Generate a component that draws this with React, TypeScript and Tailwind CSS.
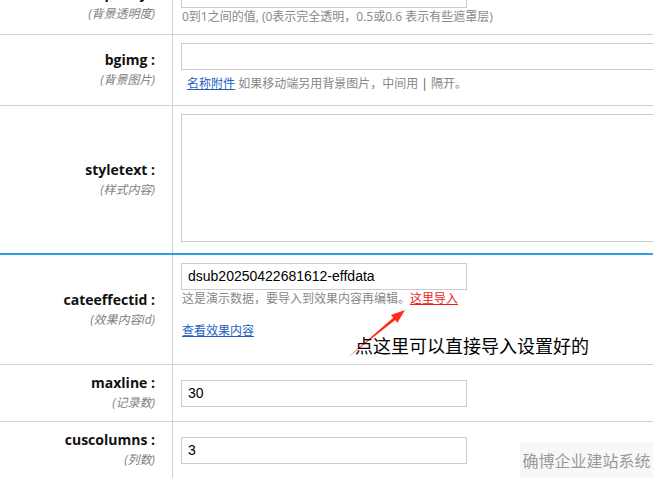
import React from "react";

const sans = "font-['Open_Sans','Noto_Sans_CJK_SC',sans-serif]";

function Row({
  label,
  sub,
  children,
  className = "",
  cellClass = "",
}: {
  label: string;
  sub: string;
  children: React.ReactNode;
  className?: string;
  cellClass?: string;
}) {
  return (
    <div className={`grid grid-cols-[173px_1fr] border-b border-[#d0d0d0] ${className}`}>
      <div className="flex flex-col items-end justify-center border-r border-[#d0d0d0] pr-[17px] text-right">
        <div className={`${sans} text-[14px] font-bold leading-[20px] text-[#111]`}>{label}</div>
        <div className={`${sans} text-[12px] italic leading-[20px] text-[#808080]`}>{sub}</div>
      </div>
      <div className={`pl-[8px] ${cellClass}`}>{children}</div>
    </div>
  );
}

function Field({ value = "", wide = false }: { value?: string; wide?: boolean }) {
  return (
    <div
      className={`flex h-[27px] items-center border border-[#cccccc] bg-white pl-[6px] font-['Liberation_Sans',Arial,sans-serif] text-[14px] text-black ${
        wide ? "w-[620px]" : "w-[286px]"
      }`}
    >
      {value}
    </div>
  );
}

function Hint({ children }: { children: React.ReactNode }) {
  return (
    <div className={`${sans} pl-[1px] text-[12px] leading-[18px] text-[#888888]`}>{children}</div>
  );
}

export default function App() {
  return (
    <div className="relative h-[478px] w-[653px] overflow-hidden bg-white">
      <div className="mt-[-27px] w-[1000px]">
        <Row label="opacity :" sub="(背景透明度)" cellClass="pt-[8px] pb-[8px]">
          <Field />
          <Hint>0到1之间的值, (0表示完全透明，0.5或0.6 表示有些遮罩层)</Hint>
        </Row>

        <Row label="bgimg :" sub="(背景图片)" cellClass="pt-[8px] pb-[12px]">
          <Field wide />
          <div className="mt-[5px]">
            <Hint>
              <a className="ml-[5px] text-[#1f5fbf] underline" href="#">
                名称附件
              </a>{" "}
              如果移动端另用背景图片，中间用 <span className="text-[#555]">|</span> 隔开。
            </Hint>
          </div>
        </Row>

        <Row
          label="styletext :"
          sub="(样式内容)"
          className="!border-b-2 !border-[#2d9fe3]"
          cellClass="pt-[8px] pb-[11px]"
        >
          <div className="h-[128px] w-[620px] border border-[#cccccc] bg-white" />
        </Row>

        <Row label="cateeffectid :" sub="(效果内容id)" cellClass="pt-[8px] pb-[24px]">
          <Field value="dsub20250422681612-effdata" />
          <Hint>
            这是演示数据，要导入到效果内容再编辑。
            <a className="text-[#ee1c1c] underline" href="#">
              这里导入
            </a>
          </Hint>
          <div className="mt-[14px]">
            <Hint>
              <a className="text-[#1f5fbf] underline" href="#">
                查看效果内容
              </a>
            </Hint>
          </div>
        </Row>

        <Row label="maxline :" sub="(记录数)" cellClass="pt-[15px] pb-[14px]">
          <Field value="30" />
        </Row>

        <Row label="cuscolumns :" sub="(列数)" cellClass="pt-[15px] pb-[14px]">
          <Field value="3" />
        </Row>
      </div>

      {/* annotation */}
      <svg className="pointer-events-none absolute left-0 top-0" width="653" height="478">
        <polygon
          points="347,358 395.2,320.1 397.4,322.8 405,310 391,315 393.2,317.7"
          fill="#ff2a1a"
        />
      </svg>
      <div className="absolute left-[355px] top-[333px] font-['Noto_Sans_CJK_SC',sans-serif] text-[18px] leading-[24px] text-black">
        点这里可以直接导入设置好的
      </div>

      <div className="absolute bottom-0 right-0 flex h-[36px] w-[133px] items-center justify-center bg-[#f8f8f8] font-['Noto_Sans_CJK_SC',sans-serif] text-[16px] text-[#9a9a9a]">
        确博企业建站系统
      </div>
    </div>
  );
}
